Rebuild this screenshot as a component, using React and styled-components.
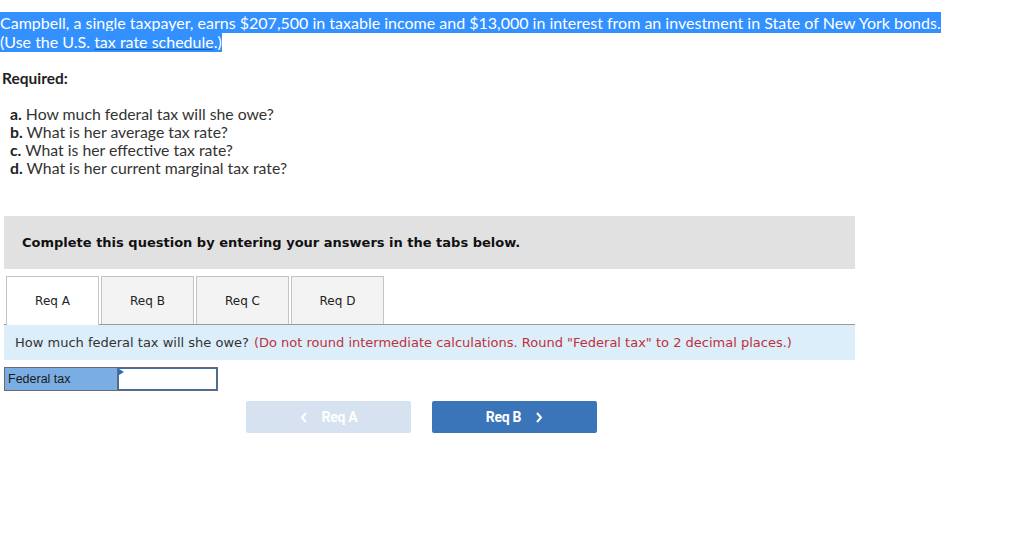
import React from "react";
import styled, { createGlobalStyle } from "styled-components";

const GlobalStyle = createGlobalStyle`
  body {
    margin: 0;
    background: #fff;
    font-family: "Lato", "Liberation Sans", sans-serif;
    color: #2d2d2d;
  }
`;

const Page = styled.div`
  width: 1011px;
  height: 560px;
  padding-top: 14px;
  box-sizing: border-box;
`;

const Intro = styled.p`
  margin: 0;
  font-size: 16px;
  line-height: 18.5px;
`;

const Selected = styled.span`
  background: #3390ff;
  color: #fff;
  padding: 1px 0;
`;

const Link = styled.span`
  text-decoration: underline;
  text-decoration-color: #1d5fb0;
`;

const Required = styled.h3`
  margin: 18px 0 0 2px;
  font-size: 15.5px;
  line-height: 18px;
  font-weight: 700;
  color: #222;
`;

const Questions = styled.ol`
  list-style: none;
  margin: 18px 0 0 10px;
  padding: 0;
  font-size: 15.8px;
  line-height: 18px;
  color: #333;
`;

const Letter = styled.b`
  font-weight: 700;
  color: #222;
`;

const Panel = styled.div`
  margin: 39px 0 0 4px;
  width: 851px;
  font-family: "DejaVu Sans", Verdana, sans-serif;
`;

const Banner = styled.div`
  background: #e1e1e1;
  height: 53px;
  display: flex;
  align-items: center;
  padding-left: 18px;
  font-size: 13px;
  font-weight: 700;
  color: #111;
`;

const TabRow = styled.div`
  display: flex;
  gap: 2px;
  margin-top: 7px;
  padding-left: 2px;
  border-bottom: 1px solid #9a9a9a;
`;

const Tab = styled.div`
  width: 93px;
  box-sizing: border-box;
  display: flex;
  align-items: center;
  justify-content: center;
  font-size: 12px;
  color: #222;
  border: 1px solid #c4c4c4;
  border-bottom: none;
  background: ${(p) => (p.$active ? "#fff" : "#f3f3f3")};
  margin-bottom: ${(p) => (p.$active ? "-1px" : "0")};
  height: ${(p) => (p.$active ? "49px" : "48px")};
`;

const Info = styled.div`
  background: #dbeefa;
  height: 35px;
  display: flex;
  align-items: center;
  padding-left: 11px;
  font-size: 13px;
  color: #333;
`;

const Note = styled.span`
  color: #c0303a;
  margin-left: 5px;
`;

const Field = styled.div`
  display: flex;
  margin-top: 7px;
  height: 24px;
  font-family: "Liberation Sans", Arial, sans-serif;
`;

const Label = styled.div`
  width: 113px;
  box-sizing: border-box;
  background: #7aade4;
  border: 1px solid #6a6a6a;
  border-right: none;
  display: flex;
  align-items: center;
  padding-left: 3px;
  font-size: 12.5px;
  color: #1a1a1a;
`;

const Input = styled.div`
  position: relative;
  width: 101px;
  box-sizing: border-box;
  border: 1px solid #6a6a6a;
  background: #fff;
  box-shadow: inset 0 0 0 1px #3a6fae;
`;

const Flag = styled.span`
  position: absolute;
  left: 1px;
  top: 1px;
  width: 0;
  height: 0;
  border-top: 3px solid transparent;
  border-bottom: 3px solid transparent;
  border-left: 5px solid #2a6ac0;
`;

const Nav = styled.div`
  display: flex;
  gap: 21px;
  margin: 10px 0 0 242px;
`;

const NavButton = styled.div`
  width: 165px;
  height: 32px;
  border-radius: 2px;
  display: flex;
  align-items: center;
  justify-content: center;
  gap: 14px;
  font-family: "Roboto", "Liberation Sans", sans-serif;
  font-weight: 700;
  font-size: 14px;
  letter-spacing: -0.3px;
  color: #fff;
  background: ${(p) => (p.$disabled ? "#d6e2f0" : "#3a75b9")};
`;

const Chevron = ({ dir }) => (
  <svg width="8" height="11" viewBox="0 0 8 11">
    <path
      d={dir === "left" ? "M6 1 L2 5.5 L6 10" : "M2 1 L6 5.5 L2 10"}
      fill="none"
      stroke="#fff"
      strokeWidth="2"
    />
  </svg>
);

export default function App() {
  return (
    <Page>
      <GlobalStyle />
      <Intro>
        <Selected>
          Campbell, a single taxpayer, earns $207,500 in taxable income and $13,000 in interest from an investment in State of New York bonds.
        </Selected>
        <br />
        <Selected>
          (Use the U.S. <Link>tax rate schedule</Link>.)
        </Selected>
      </Intro>
      <Required>Required:</Required>
      <Questions>
        <li><Letter>a.</Letter> How much federal tax will she owe?</li>
        <li><Letter>b.</Letter> What is her average tax rate?</li>
        <li><Letter>c.</Letter> What is her effective tax rate?</li>
        <li><Letter>d.</Letter> What is her current marginal tax rate?</li>
      </Questions>
      <Panel>
        <Banner>Complete this question by entering your answers in the tabs below.</Banner>
        <TabRow>
          <Tab $active>Req A</Tab>
          <Tab>Req B</Tab>
          <Tab>Req C</Tab>
          <Tab>Req D</Tab>
        </TabRow>
        <Info>
          How much federal tax will she owe?
          <Note>(Do not round intermediate calculations. Round "Federal tax" to 2 decimal places.)</Note>
        </Info>
        <Field>
          <Label>Federal tax</Label>
          <Input><Flag /></Input>
        </Field>
        <Nav>
          <NavButton $disabled><Chevron dir="left" />Req A</NavButton>
          <NavButton>Req B<Chevron dir="right" /></NavButton>
        </Nav>
      </Panel>
    </Page>
  );
}
